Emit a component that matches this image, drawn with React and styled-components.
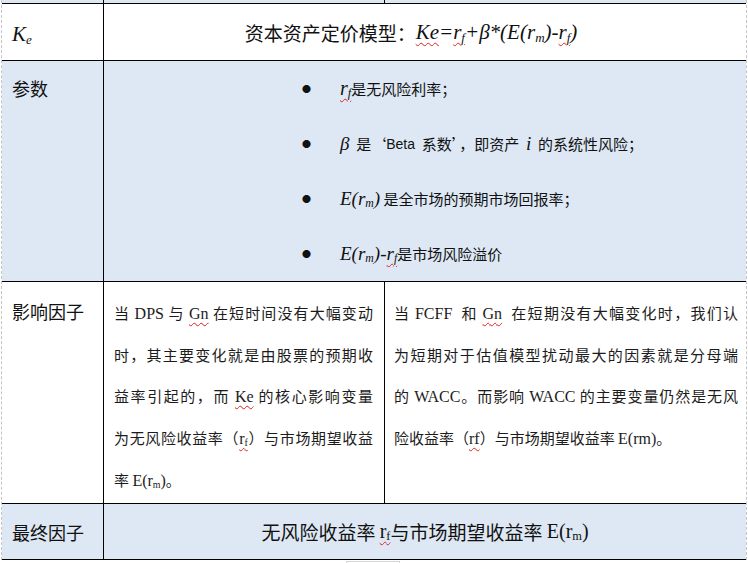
import React from "react";
import styled, { createGlobalStyle } from "styled-components";

const GlobalStyle = createGlobalStyle`
  html, body {
    margin: 0;
    padding: 0;
    background: #fff;
  }
  body {
    font-family: "Noto Sans CJK SC", "Liberation Sans", sans-serif;
    color: #111;
  }
`;

const CJK = `"Noto Sans CJK SC", sans-serif`;
const SERIF = `"Liberation Serif", "Noto Sans CJK SC", serif`;

const Sheet = styled.div`
  margin-left: 1px;
  width: 744px;
  border-left: 1px dashed #c4c4c4;
  border-right: 1px dashed #c4c4c4;
`;

const Row = styled.div`
  display: grid;
  grid-template-columns: ${(p) => (p.$split ? "101px 281px 1fr" : "101px 1fr")};
  height: ${(p) => p.$h}px;
  background: ${(p) => (p.$tint ? "#dde8f4" : "#fff")};
  border-bottom: 1px solid #000;
`;

const Cell = styled.div`
  border-left: ${(p) => (p.$first ? "none" : "1px solid #000")};
  min-width: 0;
`;

const Label = styled(Cell)`
  padding: ${(p) => p.$top || 0}px 0 0 10px;
  font-family: ${CJK};
  font-size: 18px;
  line-height: 24px;
  display: ${(p) => (p.$middle ? "flex" : "block")};
  align-items: center;
`;

const Centered = styled(Cell)`
  display: flex;
  align-items: center;
  justify-content: center;
  padding-right: ${(p) => p.$shift || 0}px;
  font-family: ${CJK};
  font-size: 19px;
  white-space: nowrap;
`;

const KeSymbol = styled.span`
  font-family: ${SERIF};
  font-style: italic;
  font-size: 21px;
  padding-top: 4px;
`;

const Formula = styled.span`
  font-family: ${SERIF};
  font-style: italic;
  font-size: ${(p) => p.$size || 19}px;
`;

const Roman = styled.span`
  font-family: ${SERIF};
  font-size: ${(p) => p.$size || 16}px;
`;

const Sans = styled.span`
  font-family: "Liberation Sans", sans-serif;
  font-size: 14px;
`;

const Sub = styled.sub`
  font-size: 0.62em;
  vertical-align: -0.2em;
  line-height: 0;
`;

const Wavy = styled.span`
  text-decoration: underline wavy #e02020;
  text-decoration-thickness: 1px;
  text-underline-offset: 3px;
`;

const BulletList = styled.ul`
  list-style: none;
  margin: 0;
  padding: 0 0 0 198px;
`;

const Item = styled.li`
  display: flex;
  align-items: center;
  height: 55px;
  font-family: ${CJK};
  font-size: 15px;
`;

const Dot = styled.span`
  width: 38px;
  flex: none;
  font-size: 9px;
  line-height: 1;
`;

const Para = styled(Cell)`
  padding: 10px ${(p) => p.$pr}px 0 ${(p) => p.$pl}px;
  font-family: ${CJK};
  font-size: 15px;
  line-height: 41px;
  color: #1c1c1c;
`;

const Line = styled.div`
  text-align: justify;
  text-align-last: ${(p) => (p.$last ? "left" : "justify")};
`;

const Tail = styled.div`
  margin: 1px 0 0 346px;
  width: 52px;
  height: 8px;
  border: 1px solid #d6d6d6;
  border-bottom: none;
`;

const rf = (
  <Wavy>
    r<Sub>f</Sub>
  </Wavy>
);
const rm = (
  <>
    r<Sub>m</Sub>
  </>
);

export default function App() {
  return (
    <>
      <GlobalStyle />
      <Sheet>
        <Row $h={3} $split $tint>
          <Cell $first />
          <Cell />
          <Cell />
        </Row>

        <Row $h={56}>
          <Label $first $middle>
            <KeSymbol>
              K<Sub>e</Sub>
            </KeSymbol>
          </Label>
          <Centered $shift={28}>
            资本资产定价模型：
            <Formula $size={21}>
              <Wavy>Ke</Wavy>={rf}+β*(E({rm})-{rf})
            </Formula>
          </Centered>
        </Row>

        <Row $h={220} $tint>
          <Label $first $top={15}>
            参数
          </Label>
          <Cell>
            <BulletList>
              <Item>
                <Dot>●</Dot>
                <Formula $size={20}>{rf}</Formula>
                是无风险利率；
              </Item>
              <Item>
                <Dot>●</Dot>
                <Formula>β</Formula>&nbsp;&nbsp;是‘<Sans>Beta</Sans>&nbsp; 系数’，即资产&nbsp;&nbsp;
                <Formula>i</Formula>&nbsp;&nbsp;的系统性风险；
              </Item>
              <Item>
                <Dot>●</Dot>
                <Formula>E({rm})</Formula>&nbsp;是全市场的预期市场回报率；
              </Item>
              <Item>
                <Dot>●</Dot>
                <Formula>
                  E({rm})-{rf}
                </Formula>
                是市场风险溢价
              </Item>
            </BulletList>
          </Cell>
        </Row>

        <Row $h={221} $split>
          <Label $first $top={17}>
            影响因子
          </Label>
          <Para $pl={10} $pr={11}>
            <Line>
              当 <Roman>DPS</Roman> 与 <Roman><Wavy>Gn</Wavy></Roman> 在短时间没有大幅变动
            </Line>
            <Line>时，其主要变化就是由股票的预期收</Line>
            <Line>
              益率引起的，而 <Roman><Wavy>Ke</Wavy></Roman> 的核心影响变量
            </Line>
            <Line>
              为无风险收益率（<Roman>{rf}</Roman>）与市场期望收益
            </Line>
            <Line $last>
              率 <Roman>E({rm})</Roman>。
            </Line>
          </Para>
          <Para $pl={9} $pr={8}>
            <Line>
              当 <Roman>FCFF</Roman>&nbsp; 和 <Roman><Wavy>Gn</Wavy></Roman>&nbsp; 在短期没有大幅变化时，我们认
            </Line>
            <Line>为短期对于估值模型扰动最大的因素就是分母端</Line>
            <Line>
              的 <Roman>WACC</Roman>。而影响 <Roman>WACC</Roman> 的主要变量仍然是无风
            </Line>
            <Line $last>
              险收益率（<Roman><Wavy>rf</Wavy></Roman>）与市场期望收益率 <Roman>E(rm)</Roman>。
            </Line>
          </Para>
        </Row>

        <Row $h={55} $tint>
          <Label $first $middle>
            最终因子
          </Label>
          <Centered>
            无风险收益率&nbsp;<Roman $size={20}>{rf}</Roman>与市场期望收益率&nbsp;
            <Roman $size={20}>E({rm})</Roman>
          </Centered>
        </Row>
      </Sheet>
      <Tail />
    </>
  );
}
